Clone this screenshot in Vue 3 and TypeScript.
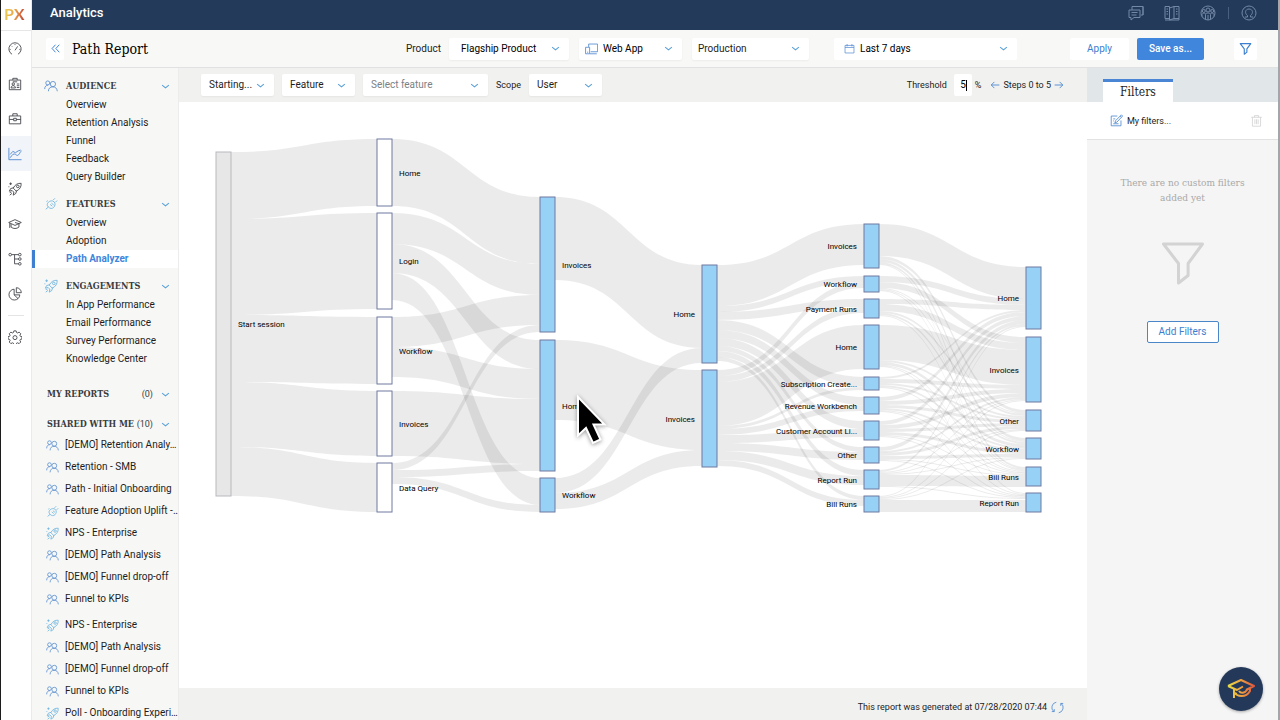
<script setup lang="ts">
import { h, ref } from 'vue'

const circle = (cx: number, cy: number, r: number): string =>
  `M${cx - r} ${cy}a${r} ${r} 0 1 0 ${2 * r} 0a${r} ${r} 0 1 0 ${-2 * r} 0`

const glyphs: Record<string, string> = {
  gauge: 'M4.6 14A7 7 0 1 1 11.4 14M8 9.5L11 5M2 8.5h1M13 8.5h1M8 2.5v1M4 4.5l.7.7',
  badge: 'M1.5 3.5h13v11h-13zM5.5 3.5v-2h5v2M5.5 5.5h5M3.5 12.5c0-3.5 5-3.5 5 0zM10 8h3M10 10h3M10 12h3' + circle(6, 8, 1.4),
  briefcase: 'M1.5 4.5h13v9h-13zM5.5 4.5v-2.500h5v2.500M1.5 8.500h5M9.500 8.500h5M6.500 7.200h3v2.800h-3z',
  chart: 'M1 1v13.500h14.500M2 12.500c2-1 2.500-4.500 5-4.500s3 3 5 1 1.500-3.500 3.500-4.500M2.500 8.500l3-3.500 3 1.500 3-2 3-1',
  rocket: 'M15 1.500c-4-.3-7 1.500-9 5.500l3.500 3.500c4-2 5.800-5 5.500-9zM6.500 6.500L3 7.500l-1.500 3 3-.8M9.700 9.700l-.7 3.300-3 2 .6-3.500M4.500 9.500l2.200 2.200M2 12l2-.5M2 15l2.500-2M3 .5v3M1.500 2h3M1 5v1' + circle(11.2, 5, 1.5),
  cap: 'M.8 6.300L8 3l7.200 3.300L8 9.600zM3.500 8v3.500c2.500 2.200 6.500 2.200 9 0V8M2 7v5.500M8 6.300l5 1.500',
  tree: 'M4 3h8M7.500 3v10.500H12M7.500 8H12' + circle(2.5, 3, 1.5) + circle(13.5, 3, 1.500) + circle(13.500, 8, 1.500) + circle(13.500, 13.500, 1.500),
  pie: 'M7 2.500A6.200 6.200 0 1 0 13.500 9H7zM9.500.8v5.700h5.700A5.700 5.700 0 0 0 9.500.8zM7 9l4.500 4.300',
  gear: 'M6.700 1h2.600l.5 1.900 1.200.5 1.700-1 1.900 1.900-1 1.700.5 1.200 1.900.5v2.600l-1.900.5-.5 1.200 1 1.700-1.900 1.900-1.700-1-1.200.5-.5 1.900H6.700l-.5-1.900-1.200-.5-1.700 1-1.900-1.900 1-1.700-.5-1.200L0 10.300V7.700l1.900-.5.5-1.200-1-1.700 1.900-1.900 1.700 1 1.200-.5z' + circle(8, 8.7, 2.3),
  people: 'M.8 11.500c0-3 1.700-4.500 4-4.500M5 14c.2-3.500 2-5 5-5s4.800 1.500 5.200 5' + circle(4.300, 4.500, 2.300) + circle(10.200, 5.800, 3),
  plug: 'M2 14l3-2.500M5 11.500c-2-2-1.500-4 0-5.500s4.500-2.500 6.500-.5 1 5-.5 6.500-4 1.500-6-.5zM10.500 3.500l2-2M13 6l2-2M7 8.500l2.500 2M8.500 7l2.500 2M3 5.500l1-1.500',
  chat: 'M4 1.500h11v8.500h-2M1 5h11v7.500H6l-3 2.500v-2.500H1zM3.500 7.500h6M3.500 10h5M4 1.500V5M15 1.500V10',
  book: 'M1 1.500h4.500v12H1zM5.500 3L10 1.500v12L5.500 15zM10 1.500h5v12h-5M2.500 4h1.500M2.500 6.500h1.500M2.500 9h1.500M12 4h1.500M12 6.500h1.500M12 9h1.500M15 13.500v1.500H1',
  globe: circle(8, 8, 7) + circle(8, 5, 2) + circle(3.800, 6, 1.500) + circle(12.200, 6, 1.500) + 'M5.500 14.500V9.500c0-2 5-2 5 0v5M2 11.500V9.500c.5-1.500 2-1.500 3.500-1M14 11.500V9.500c-.5-1.500-2-1.500-3.500-1M8 10v5',
  user: circle(8, 8, 7) + 'M4 12h2.500v-1.500C3.500 8.500 4 4 8 4s4.500 4.500 1.500 6.500V12H12',
  calendar: 'M1.500 3.500h13v11h-13zM1.500 6.500h13M4.500 1.500v3.500M11.500 1.500v3.500',
  devices: 'M4.500 6V2.500h11v9.500H7M6 14.500h8.500M.7 6.500h5v8h-5zM2.500 12.500h1.500',
  funnel: 'M1.500 2h13L9.700 8.500v4L6.500 15V8.500z',
  edit: 'M9 2.500H1.500v12h12V8M14 1l1.500 1.500-7 7.500-2.500.8.800-2.500zM4 6h2.500M4 8.500h1M4 12h6.500M12.500 2.500L14 4',
  trash: 'M1.500 4h13M5.500 4V2h5v2M3 4v11h10V4M6 6.500v6M8 6.500v6M10 6.500v6',
  refresh: 'M6.500 1.500A6.500 6.500 0 0 0 3.500 13M1 13h3v-3M9.500 14.500A6.500 6.500 0 0 0 12.500 3M15 3h-3v3',
  left: 'M15 8H2M7 3L2 8l5 5',
  right: 'M1 8h13M9 3l5 5-5 5',
  collapse: 'M8 2.500L3 8l5 5.500M13.500 2.500L8.500 8l5 5.500',
  chevron: 'M2 5.500l6 5 6-5',
}

const Glyph = (p: { name: string }) =>
  h('svg', { viewBox: '0 0 16 16', 'aria-hidden': 'true' }, [h('path', { d: glyphs[p.name] })])

const rail = [
  { icon: 'gauge', label: 'Dashboard' },
  { icon: 'badge', label: 'Accounts' },
  { icon: 'briefcase', label: 'Business' },
  { icon: 'chart', label: 'Analytics' },
  { icon: 'rocket', label: 'Engagements' },
  { icon: 'cap', label: 'Knowledge' },
  { icon: 'tree', label: 'Product map' },
  { icon: 'pie', label: 'Segments' },
]

const sections = [
  { title: 'AUDIENCE', icon: 'people', items: ['Overview', 'Retention Analysis', 'Funnel', 'Feedback', 'Query Builder'] },
  { title: 'FEATURES', icon: 'plug', items: ['Overview', 'Adoption', 'Path Analyzer'] },
  { title: 'ENGAGEMENTS', icon: 'rocket', items: ['In App Performance', 'Email Performance', 'Survey Performance', 'Knowledge Center'] },
]

const sharedGroups = [
  [
    { icon: 'people', name: '[DEMO] Retention Analy…' },
    { icon: 'people', name: 'Retention - SMB' },
    { icon: 'people', name: 'Path - Initial Onboarding' },
    { icon: 'plug', name: 'Feature Adoption Uplift -…' },
    { icon: 'rocket', name: 'NPS - Enterprise' },
    { icon: 'people', name: '[DEMO] Path Analysis' },
    { icon: 'people', name: '[DEMO] Funnel drop-off' },
    { icon: 'people', name: 'Funnel to KPIs' },
  ],
  [
    { icon: 'rocket', name: 'NPS - Enterprise' },
    { icon: 'people', name: '[DEMO] Path Analysis' },
    { icon: 'people', name: '[DEMO] Funnel drop-off' },
    { icon: 'people', name: 'Funnel to KPIs' },
    { icon: 'rocket', name: 'Poll - Onboarding Experi…' },
  ],
]

const threshold = ref('5')

/* Sankey diagram: one array of [label, top, height] per step */
type Row = [string, number, number]
const NODE = 15
const stepX = [37, 198, 361, 523, 685, 847]
const steps: Row[][] = [
  [['Start session', 50, 344]],
  [['Home', 37, 67], ['Login', 111, 96], ['Workflow', 215, 67], ['Invoices', 289, 65], ['Data Query', 361, 49]],
  [['Invoices', 95, 135], ['Home', 238, 131], ['Workflow', 376, 34]],
  [['Home', 163, 98], ['Invoices', 268, 97]],
  [
    ['Invoices', 122, 44], ['Workflow', 174, 16], ['Payment Runs', 197, 19], ['Home', 223, 44],
    ['Subscription Create...', 275, 13], ['Revenue Workbench', 295, 17], ['Customer Account Li...', 319, 19],
    ['Other', 345, 16], ['Report Run', 368, 19], ['Bill Runs', 394, 16],
  ],
  [['Home', 165, 62], ['Invoices', 235, 65], ['Other', 308, 21], ['Workflow', 336, 21], ['Bill Runs', 365, 19], ['Report Run', 391, 19]],
]

/* flows[step][source][target] = band thickness */
const flows: number[][][] = [
  [[67, 96, 67, 65, 49]],
  [[67, 0, 0], [31, 29, 27], [30, 30, 0], [0, 65, 0], [7, 7, 7]],
  [[83, 0], [0, 80], [15, 16]],
  [
    [41, 6, 8, 0, 10, 8, 8, 5, 6, 4],
    [0, 6, 6, 44, 3, 6, 8, 8, 9, 6],
  ],
  [
    [32, 0, 3, 3, 2, 1],
    [6, 6, 1, 1, 1, 0],
    [5, 7, 2, 2, 1, 0],
    [0, 35, 2, 3, 1, 1],
    [2, 4, 2, 2, 1, 0],
    [4, 4, 3, 2, 1, 1],
    [4, 4, 3, 3, 1, 1],
    [4, 2, 3, 3, 1, 1],
    [2, 1, 1, 1, 11, 1],
    [1, 1, 1, 1, 0, 12],
  ],
]

const bands: string[] = []
flows.forEach((matrix, s) => {
  const arrived = steps[s + 1].map((n) => n[1])
  const x0 = stepX[s] + NODE
  const x1 = stepX[s + 1]
  const mid = (x0 + x1) / 2
  matrix.forEach((row, i) => {
    let left = steps[s][i][1]
    row.forEach((w, j) => {
      if (!w) return
      const a = left
      const b = s === 4 && i === 9 && j === 5 ? 398 : arrived[j]
      bands.push(`M${x0} ${a}C${mid} ${a} ${mid} ${b} ${x1} ${b}v${w}C${mid} ${b + w} ${mid} ${a + w} ${x0} ${a + w}z`)
      left += w
      arrived[j] += w
    })
  })
})

const nodes = steps.flatMap((list, s) =>
  list.map(([label, y, height]) => ({
    label,
    y,
    height,
    x: stepX[s],
    kind: s === 0 ? 'start' : s === 1 ? 'plain' : 'hit',
    anchor: s < 3 ? 'start' : 'end',
    tx: s < 3 ? stepX[s] + NODE + 7 : stepX[s] - 7,
  })),
)
</script>

<template>
  <div class="app">
    <nav class="rail" aria-label="Main">
      <a href="#" class="logo">PX</a>
      <a v-for="r in rail" :key="r.icon" href="#" class="rail-link" :class="{ on: r.icon === 'chart' }" :aria-label="r.label">
        <Glyph :name="r.icon" class="ico" />
      </a>
      <hr />
      <a href="#" class="rail-link" aria-label="Settings"><Glyph name="gear" class="ico" /></a>
    </nav>

    <div class="shell">
      <header class="topbar">
        <h1>Analytics</h1>
        <div class="top-tools">
          <button type="button" aria-label="Messages"><Glyph name="chat" class="ico" /></button>
          <button type="button" aria-label="Guides"><Glyph name="book" class="ico" /></button>
          <button type="button" aria-label="Community"><Glyph name="globe" class="ico" /></button>
          <i class="sep"></i>
          <button type="button" aria-label="Profile"><Glyph name="user" class="ico" /></button>
        </div>
      </header>

      <div class="toolbar">
        <button type="button" class="square back" aria-label="Collapse"><Glyph name="collapse" class="ico blue" /></button>
        <h2>Path Report</h2>
        <label class="lead" for="product">Product</label>
        <span class="pick product">
          <select id="product"><option>Flagship Product</option></select>
          <Glyph name="chevron" class="chev" />
        </span>
        <span class="pick webapp">
          <Glyph name="devices" class="ico blue pre" />
          <select aria-label="Application"><option>Web App</option></select>
          <Glyph name="chevron" class="chev" />
        </span>
        <span class="pick env">
          <select aria-label="Environment"><option>Production</option></select>
          <Glyph name="chevron" class="chev" />
        </span>
        <span class="pick dates">
          <Glyph name="calendar" class="ico blue pre" />
          <select aria-label="Date range"><option>Last 7 days</option></select>
          <Glyph name="chevron" class="chev" />
        </span>
        <div class="actions">
          <button type="button" class="apply">Apply</button>
          <button type="button" class="save">Save as...</button>
          <button type="button" class="square" aria-label="Filter"><Glyph name="funnel" class="ico blue" /></button>
        </div>
      </div>

      <div class="body">
        <aside class="side">
          <section v-for="s in sections" :key="s.title">
            <h3><Glyph :name="s.icon" class="ico" :class="s.icon" />{{ s.title }}<Glyph name="chevron" class="chev" /></h3>
            <a v-for="i in s.items" :key="i" href="#" :class="{ current: i === 'Path Analyzer' }">{{ i }}</a>
          </section>
          <h3 class="mine">MY REPORTS<span>(0)</span><Glyph name="chevron" class="chev" /></h3>
          <h3 class="shared">SHARED WITH ME<span>(10)</span><Glyph name="chevron" class="chev" /></h3>
          <ul v-for="(g, n) in sharedGroups" :key="n">
            <li v-for="i in g" :key="i.name">
              <a href="#"><Glyph :name="i.icon" class="ico" :class="i.icon" /><span>{{ i.name }}</span></a>
            </li>
          </ul>
        </aside>

        <main>
          <div class="options">
            <span class="pick w-start">
              <select aria-label="Direction"><option>Starting...</option></select><Glyph name="chevron" class="chev" />
            </span>
            <span class="pick w-start">
              <select aria-label="Type"><option>Feature</option></select><Glyph name="chevron" class="chev" />
            </span>
            <span class="pick w-feature muted">
              <select aria-label="Feature"><option>Select feature</option></select><Glyph name="chevron" class="chev" />
            </span>
            <label for="scope">Scope</label>
            <span class="pick w-start">
              <select id="scope"><option>User</option></select><Glyph name="chevron" class="chev" />
            </span>
            <div class="range">
              <label for="threshold">Threshold</label>
              <span class="num"><input id="threshold" v-model="threshold" type="text" /><i></i></span>
              <span class="pct">%</span>
              <button type="button" aria-label="Previous steps"><Glyph name="left" class="ico blue" /></button>
              <span>Steps 0 to 5</span>
              <button type="button" aria-label="Next steps"><Glyph name="right" class="ico blue" /></button>
            </div>
          </div>

          <div class="canvas">
            <svg class="sankey" viewBox="0 0 908 586" preserveAspectRatio="xMinYMin meet" role="img" aria-label="User paths">
              <path v-for="(d, i) in bands" :key="i" :d="d" class="band" />
              <g v-for="(n, i) in nodes" :key="'n' + i">
                <rect :x="n.x" :y="n.y" width="15" :height="n.height" :class="n.kind" />
                <text :x="n.tx" :y="n.y + n.height / 2 + 3" :text-anchor="n.anchor">{{ n.label }}</text>
              </g>
              <path class="pointer" d="M399 295v38.500l8-7.500 7 15 7.500-3.500-7-15h11z" />
            </svg>
          </div>

          <footer>
            <span>This report was generated at 07/28/2020 07:44</span>
            <button type="button" aria-label="Refresh"><Glyph name="refresh" class="ico blue" /></button>
          </footer>
        </main>

        <aside class="filters">
          <div class="tabs"><button type="button">Filters</button></div>
          <div class="saved">
            <Glyph name="edit" class="ico blue" />
            <a href="#">My filters...</a>
            <button type="button" aria-label="Delete filter"><Glyph name="trash" class="ico" /></button>
          </div>
          <div class="empty">
            <p>There are no custom filters added yet</p>
            <Glyph name="funnel" class="big" />
            <button type="button">Add Filters</button>
          </div>
        </aside>
      </div>
    </div>

    <button type="button" class="fab" aria-label="Learning center">
      <svg viewBox="0 0 32 32" aria-hidden="true">
        <defs>
          <linearGradient id="warm" x1="0" x2="1" y1="0" y2="0">
            <stop offset="0" stop-color="#e8dd4a" />
            <stop offset="0.5" stop-color="#f0a040" />
            <stop offset="1" stop-color="#e2583e" />
          </linearGradient>
        </defs>
        <path d="M3 13L16 7l13 6-8 4M3 13l9 4 6-3.500M9 16v9M9 19c3 5 12 6 16-1v-3M9 20l3 1M14 18c2 3 6 2 8-1" />
      </svg>
    </button>
  </div>
</template>

<style>
body {
  margin: 0;
}
</style>

<style scoped>
.app {
  --slab: 'Roboto Slab', 'DejaVu Serif Condensed', 'DejaVu Serif', serif;
  display: flex;
  height: 100vh;
  overflow: hidden;
  box-sizing: border-box;
  border-left: 1px solid #1c1c1c;
  border-right: 2px solid #a3a6aa;
  font: 10px/18px Roboto, 'Liberation Sans', sans-serif;
  color: #1d1d1d;
  background: #fff;
}
.app *,
.app *::before {
  box-sizing: border-box;
}
a {
  color: inherit;
  text-decoration: none;
}
button {
  font: inherit;
  color: inherit;
  border: 0;
  padding: 0;
  background: none;
  display: flex;
  align-items: center;
  justify-content: center;
}
h1,
h2,
h3,
p,
ul {
  margin: 0;
  padding: 0;
}
.ico,
.chev,
.big {
  fill: none;
  stroke: currentColor;
  stroke-width: 1;
  stroke-linejoin: round;
  flex: none;
  display: block;
}
.ico {
  width: 13px;
  height: 13px;
}
.chev {
  width: 9px;
  height: 9px;
  color: #5aa0d8;
  stroke-width: 2;
}
.blue {
  color: #4a86d0;
}

.rail {
  width: 31px;
  flex: none;
  display: flex;
  flex-direction: column;
  border-right: 1px solid #e9e9ee;
}
.logo {
  height: 31px;
  padding-left: 3px;
  border-bottom: 1px solid #e6e6e6;
  font: 700 16px/28px Lato, Roboto, sans-serif;
  color: transparent;
  background: linear-gradient(100deg, #e9cf55 15%, #e9a548 45%, #d0603e 65%, #8c3a3a 85%) text;
}
.rail-link {
  height: 35px;
  display: flex;
  align-items: center;
  justify-content: center;
  padding-right: 3px;
  color: #414349;
}
.rail-link .ico {
  width: 14px;
  height: 14px;
}
.rail-link.on {
  color: #4a86d0;
  background: #f1f4f9;
}
.rail hr {
  width: 16px;
  margin: 4px 0 3px 7px;
  border: 0;
  border-top: 1px solid #e4e4e6;
}

.shell {
  flex: 1;
  min-width: 0;
  display: flex;
  flex-direction: column;
}
.topbar {
  height: 30px;
  flex: none;
  display: flex;
  align-items: center;
  justify-content: space-between;
  padding: 0 21px 4px 18px;
  color: #fff;
  background: #243a5a;
}
.topbar h1 {
  font: 500 13px/18px Roboto, sans-serif;
}
.top-tools {
  display: flex;
  align-items: center;
  gap: 20px;
  color: #7389a6;
}
.top-tools .ico {
  width: 16px;
  height: 16px;
}
.sep {
  width: 1px;
  height: 12px;
  margin: 0 -8px;
  background: #4b607e;
}

.toolbar {
  height: 38px;
  flex: none;
  display: flex;
  align-items: center;
  padding: 0 21px 0 14px;
  background: #f8f8f7;
  border-bottom: 1px solid #dfe1e2;
}
.square {
  width: 23px;
  height: 22px;
  background: #fff;
  border-radius: 2px;
}
.square .ico {
  color: #3c7fd0;
  stroke-width: 1.4;
}
.square.back {
  width: 18px;
}
.square.back .ico {
  width: 11px;
  height: 11px;
}
.toolbar h2 {
  width: 342px;
  padding-left: 8px;
  font: 500 14px/20px var(--slab);
  color: #000;
}
.lead {
  width: 43px;
}
.pick {
  height: 22px;
  display: flex;
  align-items: center;
  background: #fff;
  border-radius: 2px;
  box-shadow: 0 1px 2px #0000000d;
  padding-right: 9px;
}
.pick select {
  appearance: none;
  flex: 1;
  min-width: 0;
  width: 100%;
  height: 100%;
  border: 0;
  padding: 0 0 0 8px;
  background: none;
  font: inherit;
  color: inherit;
}
.pick .pre {
  margin-left: 6px;
}
.pick.product {
  width: 120px;
  margin-right: 10px;
}
.pick.product select {
  padding-left: 12px;
}
.pick.webapp {
  width: 103px;
  margin-right: 10px;
}
.pick.webapp select,
.pick.dates select {
  padding-left: 5px;
}
.pick.env {
  width: 117px;
  margin-right: 25px;
}
.pick.env select {
  padding-left: 6px;
}
.pick.product,
.pick.webapp,
.pick.dates {
  color: #000;
}
.pick.dates {
  width: 183px;
  box-shadow: none;
}
.pick.dates .pre {
  margin-left: 10px;
  width: 11px;
}
.actions {
  display: flex;
  margin-left: auto;
}
.apply {
  width: 59px;
  height: 22px;
  color: #3c7fd0;
  background: #fff;
  border-radius: 2px;
}
.save {
  width: 67px;
  height: 22px;
  margin: 0 30px 0 8px;
  color: #fff;
  background: #3f86dc;
  border-radius: 2px;
  font-weight: 500;
}

.body {
  flex: 1;
  min-height: 0;
  display: flex;
}
.side {
  width: 147px;
  flex: none;
  overflow: hidden;
  padding-top: 8px;
  background: #f7f8f6;
  border-right: 1px solid #ececec;
}
.side section {
  margin-bottom: 8px;
}
.side h3 {
  height: 20px;
  display: flex;
  align-items: center;
  padding: 0 8px 0 12px;
  font: 700 9px/20px var(--slab);
  color: #3a3c40;
}
.side h3 .ico {
  width: 14px;
  height: 14px;
  margin-right: 8px;
}
.side h3 .chev {
  margin-left: auto;
}
.side h3 span {
  margin-left: auto;
  font: 9px/20px Roboto, sans-serif;
}
.side h3 span + .chev {
  margin-left: 8px;
}
.side h3.mine {
  margin-top: 16px;
  padding-left: 15px;
}
.side h3.shared {
  margin-top: 10px;
  padding-left: 15px;
}
.people {
  color: #5b8fd0;
}
.plug,
.side .rocket {
  color: #6fb4e0;
}
.side section a {
  display: block;
  height: 18px;
  padding-left: 34px;
}
.side section a.current {
  padding-left: 31px;
  border-left: 3px solid #3f7fd2;
  color: #3f86dc;
  background: #fff;
  font-weight: 700;
}
.side ul {
  list-style: none;
  margin-bottom: 4px;
}
.side li a {
  height: 22px;
  display: flex;
  align-items: center;
  padding-left: 14px;
  gap: 6px;
}
.side li span {
  white-space: nowrap;
}

main {
  flex: 1;
  min-width: 0;
  display: flex;
  flex-direction: column;
}
.options {
  height: 34px;
  flex: none;
  display: flex;
  align-items: center;
  gap: 8px;
  padding: 0 23px 0 22px;
  background: #f1f1f0;
}
.options label,
.range {
  font-size: 9px;
}
.w-start {
  width: 73px;
}
.w-feature {
  width: 125px;
}
.muted {
  color: #7d8085;
}
.range {
  display: flex;
  align-items: center;
  margin-left: auto;
  gap: 3px;
}
.range .ico {
  width: 10px;
  height: 10px;
  stroke-width: 1.4;
}
.num {
  display: flex;
  align-items: center;
  width: 18px;
  height: 22px;
  margin-left: 4px;
  background: #fff;
  border-radius: 2px;
}
.num input {
  width: 12px;
  border: 0;
  padding: 0;
  outline: 0;
  background: none;
  font: 10px/18px Roboto, sans-serif;
  color: #000;
  text-align: right;
}
.num i {
  width: 1px;
  height: 11px;
  background: #000;
}
.pct {
  margin-right: 6px;
}
.canvas {
  flex: 1;
  min-height: 0;
  overflow: hidden;
}
.sankey {
  display: block;
  width: 100%;
}
.sankey text {
  font-size: 8px;
  fill: #000;
}
.band {
  fill: #000;
  fill-opacity: 0.08;
}
rect {
  stroke: #70789f;
}
rect.start {
  fill: #00000018;
  stroke: #b9b9be;
}
rect.plain {
  fill: #fff;
}
rect.hit {
  fill: #98d1f6;
}
.pointer {
  fill: #000;
  stroke: #fff;
  stroke-width: 2;
  filter: drop-shadow(0 1px 2px #0006);
}
footer {
  height: 32px;
  flex: none;
  display: flex;
  align-items: center;
  justify-content: flex-end;
  gap: 4px;
  padding: 6px 23px 0 0;
  font-size: 9px;
  background: #f1f1f0;
}

.filters {
  width: 191px;
  flex: none;
  background: #f5f5f5;
}
.tabs {
  height: 34px;
  display: flex;
  align-items: flex-end;
  padding-left: 16px;
  background: #e1e6e8;
}
.tabs button {
  width: 70px;
  height: 23px;
  border-top: 3px solid #4a84d4;
  background: #fff;
  font: 500 12px/18px var(--slab);
}
.saved {
  height: 38px;
  display: flex;
  align-items: center;
  gap: 4px;
  padding: 0 15px 0 23px;
  font-size: 9px;
  background: #fff;
  border-bottom: 1px solid #e2e2e2;
}
.saved button {
  margin-left: auto;
  color: #d2d2d2;
}
.empty {
  display: flex;
  flex-direction: column;
  align-items: center;
  padding-top: 35px;
}
.empty p {
  width: 140px;
  text-align: center;
  font: 10px/15px var(--slab);
  color: #a9a9a9;
}
.big {
  width: 48px;
  height: 48px;
  margin: 33px 0 35px;
  color: #d3d3d3;
}
.empty button {
  width: 72px;
  height: 22px;
  border: 1px solid #4a86c8;
  border-radius: 2px;
  background: #fff;
  color: #3c7fd0;
}
.fab {
  position: fixed;
  right: 17px;
  bottom: 9px;
  width: 44px;
  height: 44px;
  border-radius: 50%;
  background: #24395a;
  box-shadow: 0 1px 3px #0005;
}
.fab svg {
  width: 32px;
  height: 32px;
  fill: none;
  stroke: url(#warm);
  stroke-width: 2;
  stroke-linejoin: round;
}
</style>
